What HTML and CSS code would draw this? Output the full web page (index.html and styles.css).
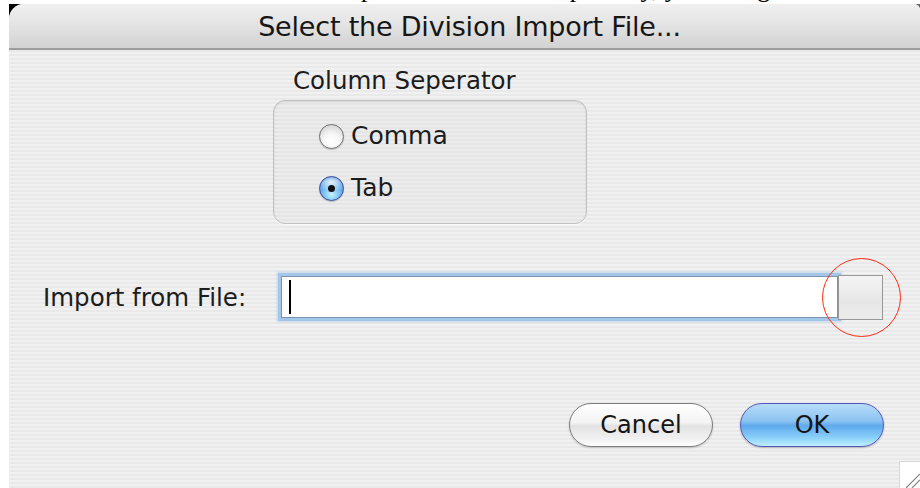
FILE: index.html
```html
<!DOCTYPE html>
<html lang="en">
<head>
<meta charset="utf-8">
<title>Select the Division Import File...</title>
<link rel="stylesheet" href="styles.css">
</head>
<body>
<div class="page">
  <div class="doc-strip"><p class="doc-line">To import the divisions separately, you will get the following dialog:</p></div>
  <div class="frame">
    <div class="window">
      <div class="titlebar">Select the Division Import File...</div>
      <div class="content">
        <div class="separator-section">
          <div class="group-label">Column Seperator</div>
          <div class="group-box">
            <label class="radio-row">
              <span class="radio"></span>
              <span class="radio-text">Comma</span>
            </label>
            <label class="radio-row">
              <span class="radio radio-on"><span class="radio-dot"></span></span>
              <span class="radio-text">Tab</span>
            </label>
          </div>
        </div>
        <div class="import-row">
          <div class="import-label">Import from File:</div>
          <div class="field"><span class="caret"></span></div>
          <div class="browse-btn"></div>
          <div class="highlight-ring"></div>
        </div>
        <div class="button-row">
          <div class="btn btn-cancel">Cancel</div>
          <div class="btn btn-ok">OK</div>
        </div>
      </div>
      <div class="grip">
        <svg width="20" height="26" viewBox="0 0 20 26">
          <line x1="6" y1="26" x2="20" y2="12" stroke="#8a8a8a" stroke-width="1.2"/>
          <line x1="12" y1="26" x2="20" y2="18" stroke="#8a8a8a" stroke-width="1.2"/>
        </svg>
      </div>
    </div>
  </div>
</div>
</body>
</html>
```

FILE: styles.css
```css
html, body {
  margin: 0;
  padding: 0;
  background: #ffffff;
}

body {
  width: 920px;
  height: 488px;
  overflow: hidden;
  font-family: "DejaVu Sans", "Liberation Sans", sans-serif;
  color: #1c1c1c;
}

.page {
  display: flex;
  flex-direction: column;
  height: 488px;
}

/* bottom edge of the document text above the dialog: only descenders show */
.doc-strip {
  flex: none;
  height: 4px;
  overflow: hidden;
}

.doc-line {
  margin: -26px 0 0 0;
  padding-left: 300px;
  font-family: "Liberation Serif", serif;
  font-size: 26px;
  line-height: 30px;
  white-space: nowrap;
  color: #000;
}

.frame {
  flex: none;
  height: 484px;
  margin-left: 9px;
  background:
    linear-gradient(#000, #000) no-repeat 0 0 / 16px 16px,
    linear-gradient(#666, #666) no-repeat right 0 top 0 / 6px 4px;
}

.window {
  position: relative;
  height: 484px;
  border-top-left-radius: 15px;
  border-top-right-radius: 6px;
  overflow: hidden;
  background: repeating-linear-gradient(to bottom, #f1f1f1 0 2px, #e9e9e9 2px 4px);
}

.titlebar {
  height: 44px;
  display: flex;
  align-items: center;
  justify-content: center;
  padding-left: 10px;
  background: linear-gradient(to bottom, #f0f0f0 0%, #e4e4e4 45%, #d2d2d2 100%);
  border-bottom: 2px solid #9c9c9c;
  font-size: 27px;
  color: #161616;
  letter-spacing: -0.2px;
}

.content {
  display: flex;
  flex-direction: column;
  padding: 0 36px 0 34px;
}

.separator-section {
  margin-top: 18px;
  margin-left: 230px;
  display: flex;
  flex-direction: column;
}

.group-label {
  margin-left: 20px;
  font-size: 24.5px;
  line-height: 26px;
  height: 26px;
}

.group-box {
  margin-top: 6px;
  width: 314px;
  height: 124px;
  box-sizing: border-box;
  border: 1px solid #c0c0c0;
  border-radius: 12px;
  box-shadow: inset 0 1px 2px rgba(0,0,0,0.1), 0 1px 0 rgba(255,255,255,0.6);
  background: repeating-linear-gradient(to bottom, #ececec 0 2px, #e5e5e5 2px 4px);
  display: flex;
  flex-direction: column;
  gap: 26px;
  padding-top: 22px;
  padding-left: 45px;
}

.radio-row {
  display: flex;
  align-items: center;
  gap: 7px;
  height: 26px;
}

.radio {
  width: 25px;
  height: 25px;
  border-radius: 50%;
  border: 1.5px solid #6f6f6f;
  box-sizing: border-box;
  background: radial-gradient(circle at 50% 72%, #ffffff 0%, #f6f6f6 40%, #c9c9c9 100%);
  box-shadow: 0 1px 1px rgba(0,0,0,0.2);
  display: flex;
  align-items: center;
  justify-content: center;
}

.radio-on {
  border-color: #34489a;
  background:
    radial-gradient(ellipse 70% 40% at 50% 22%, rgba(255,255,255,0.85), rgba(255,255,255,0) 100%),
    radial-gradient(circle at 50% 75%, #c6f0ff 0%, #6fb8f0 45%, #2f6fd0 100%);
}

.radio-dot {
  width: 7px;
  height: 7px;
  border-radius: 50%;
  background: #111;
}

.radio-text {
  font-size: 25px;
  line-height: 26px;
}

.import-row {
  position: relative;
  margin-top: 49px;
  display: flex;
  align-items: center;
  height: 48px;
}

.import-label {
  width: 238px;
  font-size: 24.5px;
}

.field {
  width: 548px;
  height: 40px;
  background: #fff;
  border: 1px solid #7a93b0;
  box-shadow: 0 0 0 3px #a4c6e8, 0 0 2px 4px rgba(150,190,230,0.5);
  display: flex;
  align-items: center;
  padding-left: 7px;
  box-sizing: content-box;
}

.caret {
  width: 2px;
  height: 34px;
  background: #000;
}

.browse-btn {
  width: 43px;
  height: 43px;
  border: 1.5px solid #979797;
  background: linear-gradient(to bottom, #f4f4f4, #e6e6e6 60%, #ececec);
  position: relative;
}

.highlight-ring {
  position: absolute;
  left: 779px;
  top: -15px;
  width: 77px;
  height: 77px;
  border: 1.5px solid #ff2a12;
  border-radius: 50%;
}

.button-row {
  margin-top: 82px;
  display: flex;
  justify-content: flex-end;
  gap: 27px;
}

.btn {
  width: 142px;
  height: 42px;
  border-radius: 22px;
  display: flex;
  align-items: center;
  justify-content: center;
  font-size: 24px;
  color: #141414;
}

.btn-cancel {
  border: 1.5px solid #7c7c7c;
  background: linear-gradient(to bottom, #ffffff 0%, #f3f3f3 45%, #e2e2e2 52%, #f2f2f2 85%, #ffffff 100%);
  box-shadow: 0 1px 2px rgba(0,0,0,0.2);
}

.btn-ok {
  border: 1.5px solid #5459b8;
  background: linear-gradient(to bottom, #b8dcf9 0%, #8cc3f2 40%, #5ea9ec 52%, #8bd0fa 80%, #bff0ff 100%);
  box-shadow: 0 1px 2px rgba(0,0,0,0.25);
}

.grip {
  position: absolute;
  right: 0;
  bottom: 0;
  width: 20px;
  height: 26px;
  background: #fff;
  border-left: 1px solid #d8d8d8;
  border-top: 1px solid #d8d8d8;
}
```
